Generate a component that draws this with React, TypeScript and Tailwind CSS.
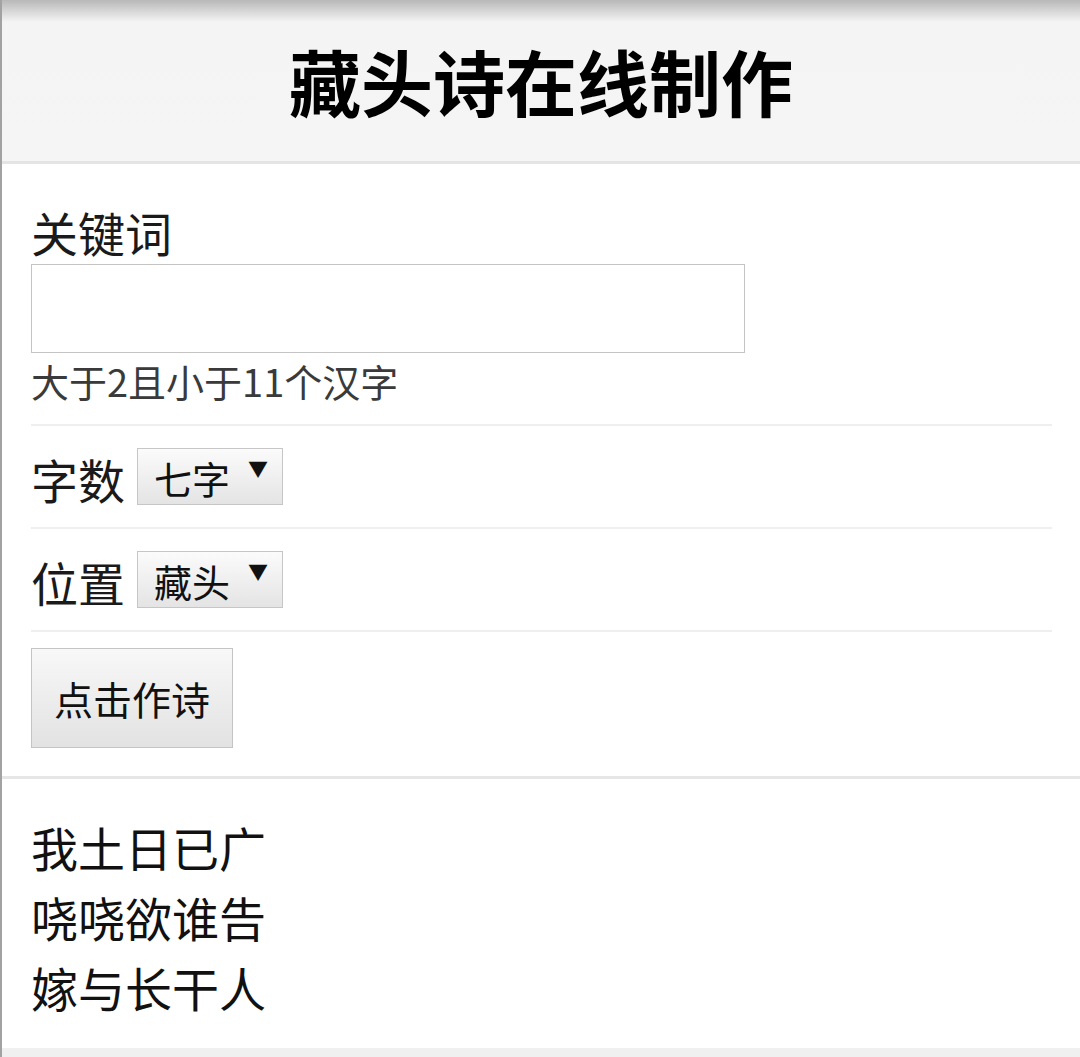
import React from 'react';

const font = { fontFamily: '"Noto Sans CJK SC", "Noto Sans", sans-serif' };

const poem = ['我土日已广', '哓哓欲谁告', '嫁与长干人'];

const FakeSelect = ({ value }: { value: string }) => (
  <div className="flex h-[57px] w-[146px] items-start border border-[#c6c6c6] bg-[linear-gradient(to_bottom,#fbfbfb,#e4e4e4)] pl-[16px] pr-[14px]">
    <span className="mt-[9px] text-[38px] leading-[40px] text-[#111]">{value}</span>
    <span className="ml-auto mt-[10px] text-[20px] leading-none text-[#111]">▼</span>
  </div>
);

const App = () => {
  return (
    <div className="min-h-[1057px] w-[1080px] border-l-2 border-[#a2a2a2] bg-white" style={font}>
      {/* header */}
      <div className="flex h-[164px] items-center justify-center border-b-[3px] border-[#e4e4e4] bg-[linear-gradient(to_bottom,#b8b8b8_0px,#f4f4f4_22px,#f5f5f5_100%)]">
        <h1 className="mt-[-2px] text-[72px] font-bold leading-none text-black">藏头诗在线制作</h1>
      </div>

      {/* form */}
      <div className="pl-[29px] pr-[28px]">
        <div className="pt-[40px] pb-[21px] border-b-2 border-[#efefef]">
          <div className="text-[47px] leading-[56px] text-[#1a1a1a]">关键词</div>
          <input
            type="text"
            className="mt-[4px] block h-[89px] w-[714px] border border-[#c4c4c4] bg-white outline-none"
          />
          <div className="mt-[6px] text-[38px] leading-[44px] text-[#3a3a3a]">大于2且小于11个汉字</div>
        </div>

        <div className="flex items-end gap-[12px] pt-[22px] pb-[22px] border-b-2 border-[#efefef]">
          <span className="mb-[-2px] text-[47px] leading-[56px] text-[#1a1a1a]">字数</span>
          <FakeSelect value="七字" />
        </div>

        <div className="flex items-end gap-[12px] pt-[22px] pb-[22px] border-b-2 border-[#efefef]">
          <span className="mb-[-2px] text-[47px] leading-[56px] text-[#1a1a1a]">位置</span>
          <FakeSelect value="藏头" />
        </div>

        <div className="pt-[16px] pb-[28px]">
          <button className="flex h-[100px] w-[202px] items-center justify-center border border-[#c4c4c4] bg-[linear-gradient(to_bottom,#f8f8f8,#e2e2e2)] text-[39px] leading-none text-[#111]">
            点击作诗
          </button>
        </div>
      </div>

      {/* result */}
      <div className="border-t-[3px] border-[#e6e6e6] pl-[29px] pt-[33px] pb-[26px]">
        {poem.map((line) => (
          <div key={line} className="text-[47px] leading-[70px] text-[#111]">
            {line}
          </div>
        ))}
      </div>

      <div className="h-[12px] bg-[#f0f0f0]" />
    </div>
  );
};

export default App;
